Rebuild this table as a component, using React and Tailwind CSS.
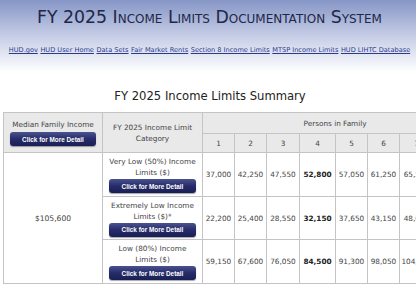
const links = [
  'HUD.gov',
  'HUD User Home',
  'Data Sets',
  'Fair Market Rents',
  'Section 8 Income Limits',
  'MTSP Income Limits',
  'HUD LIHTC Database',
];

const rows = [
  {
    label: ['Very Low (50%) Income', 'Limits ($)'],
    values: ['37,000', '42,250', '47,550', '52,800', '57,050', '61,250', '65,500', '69,700'],
  },
  {
    label: ['Extremely Low Income', 'Limits ($)*'],
    values: ['22,200', '25,400', '28,550', '32,150', '37,650', '43,150', '48,650', '54,150'],
  },
  {
    label: ['Low (80%) Income', 'Limits ($)'],
    values: ['59,150', '67,600', '76,050', '84,500', '91,300', '98,050', '104,800', '111,550'],
  },
];

const widths = [99, 100, 32, 32, 33, 36, 32, 32, 34, 34];

function DetailButton({ className = '' }) {
  return (
    <div
      className={`h-[14px] rounded-[3px] bg-gradient-to-b from-[#4a5290] via-[#262c68] to-[#1a1f55] shadow-[0_1px_1px_rgba(0,0,0,0.35)] flex items-center justify-center text-white font-bold text-[6.4px] font-['Liberation_Sans',Arial,sans-serif] ${className}`}
    >
      Click for More Detail
    </div>
  );
}

export default function App() {
  return (
    <div className="w-[416px] h-[288px] overflow-hidden bg-white font-['DejaVu_Sans',Verdana,sans-serif] text-[#333]">
      <div className="h-[72px] bg-gradient-to-b from-[#8696c6] via-[#c6cde6] to-white flex flex-col items-center">
        <h1 className="mt-[7px] text-[17.3px] leading-[20px] text-[#1f2748] [font-variant:small-caps] whitespace-nowrap pl-[3px]">
          FY 2025 Income Limits Documentation System
        </h1>
        <div className="mt-[19px] flex gap-[2.5px] text-[6.6px] leading-[9px] whitespace-nowrap pl-[3px]">
          {links.map((l) => (
            <a key={l} href="#" className="text-[#2a3a8c] underline">
              {l}
            </a>
          ))}
        </div>
      </div>

      <h2 className="mt-[17px] text-center text-[11.6px] leading-[15px] text-[#222] whitespace-nowrap pl-[4px]">
        FY 2025 Income Limits Summary
      </h2>

      <table className="mt-[8px] ml-[3px] border-collapse table-fixed text-[7.3px] leading-[11px]" style={{ width: 464 }}>
        <colgroup>
          {widths.map((w, i) => (
            <col key={i} style={{ width: w }} />
          ))}
        </colgroup>
        <thead>
          <tr className="h-[21px]">
            <th rowSpan={2} className="border border-[#c4c4c4] bg-[#e9e9e9] font-normal align-middle px-[6px]">
              <div className="text-[#444]">Median Family Income</div>
              <DetailButton className="mt-[2px]" />
            </th>
            <th rowSpan={2} className="border border-[#c4c4c4] bg-[#e9e9e9] font-normal text-[#444] align-middle px-[4px]">
              FY 2025 Income Limit
              <br />
              Category
            </th>
            <th colSpan={8} className="border border-[#c4c4c4] bg-[#e9e9e9] font-normal text-[#444]">
              Persons in Family
            </th>
          </tr>
          <tr className="h-[19px]">
            {[1, 2, 3, 4, 5, 6, 7, 8].map((n) => (
              <th key={n} className="border border-[#c4c4c4] bg-[#e9e9e9] font-normal text-[#444]">
                {n}
              </th>
            ))}
          </tr>
        </thead>
        <tbody>
          {rows.map((r, i) => (
            <tr key={i} className={i === 1 ? 'h-[43px]' : 'h-[44px]'}>
              {i === 0 && (
                <td rowSpan={3} className="border border-[#c4c4c4] text-center align-middle text-[#444] text-[7.6px]">
                  $105,600
                </td>
              )}
              <td className="border border-[#c4c4c4] align-middle px-[6px] text-center text-[#444]">
                <div>{r.label[0]}</div>
                <div>{r.label[1]}</div>
                <DetailButton className="mt-[1px]" />
              </td>
              {r.values.map((v, j) => (
                <td
                  key={j}
                  className={`border border-[#c4c4c4] text-center align-middle whitespace-nowrap ${
                    j === 3 ? 'font-bold text-[#222]' : 'text-[#444]'
                  }`}
                >
                  {v}
                </td>
              ))}
            </tr>
          ))}
        </tbody>
      </table>
    </div>
  );
}
